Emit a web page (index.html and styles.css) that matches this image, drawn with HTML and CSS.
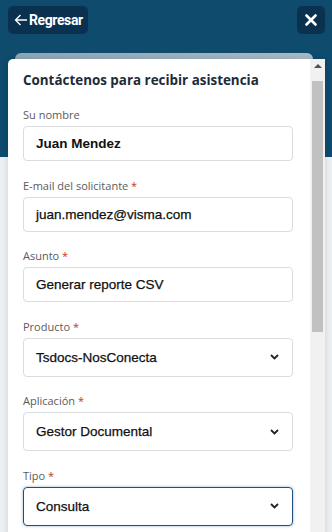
FILE: index.html
```html
<!DOCTYPE html>
<html lang="es">
<head>
    <meta charset="UTF-8">
    <meta name="viewport" content="width=device-width, initial-scale=1.0">
    <title>Contáctenos</title>
    <link rel="stylesheet" href="styles.css">
</head>
<body>
    <div class="topbar">
        <button class="back-button">
            <svg width="14" height="12" viewBox="0 0 14 12"><path d="M13 6H1.5M6.5 1L1.5 6l5 5" fill="none" stroke="#fff" stroke-width="1.3"/></svg>
            Regresar
        </button>
        <button class="close-button">
            <svg width="12" height="12" viewBox="0 0 12 12"><path d="M1.5 1.5l9 9M10.5 1.5l-9 9" stroke="#fff" stroke-width="2.6" stroke-linecap="round"/></svg>
        </button>
    </div>

    <div class="sheet-back"></div>

    <div class="sheet">
        <div class="sheet-body">
            <h2 class="title">Contáctenos para recibir asistencia</h2>

            <div class="field">
                <div class="label">Su nombre</div>
                <div class="control strong">Juan Mendez</div>
            </div>

            <div class="field">
                <div class="label">E-mail del solicitante <span class="req">*</span></div>
                <div class="control">juan.mendez@visma.com</div>
            </div>

            <div class="field">
                <div class="label">Asunto <span class="req">*</span></div>
                <div class="control">Generar reporte CSV</div>
            </div>

            <div class="field">
                <div class="label">Producto <span class="req">*</span></div>
                <div class="control select">Tsdocs-NosConecta
                    <svg width="9" height="6" viewBox="0 0 9 6"><path d="M1 1l3.5 3.5L8 1" fill="none" stroke="#222" stroke-width="1.8"/></svg>
                </div>
            </div>

            <div class="field">
                <div class="label">Aplicación <span class="req">*</span></div>
                <div class="control select">Gestor Documental
                    <svg width="9" height="6" viewBox="0 0 9 6"><path d="M1 1l3.5 3.5L8 1" fill="none" stroke="#222" stroke-width="1.8"/></svg>
                </div>
            </div>

            <div class="field">
                <div class="label">Tipo <span class="req">*</span></div>
                <div class="control select focused">Consulta
                    <svg width="9" height="6" viewBox="0 0 9 6"><path d="M1 1l3.5 3.5L8 1" fill="none" stroke="#222" stroke-width="1.8"/></svg>
                </div>
            </div>
        </div>

        <div class="scrollbar">
            <div class="scroll-up"></div>
            <div class="scroll-thumb"></div>
        </div>
    </div>
</body>
</html>
```

FILE: styles.css
```css
body {
    margin: 0;
    height: 532px;
    overflow: hidden;
    background: linear-gradient(#0e4b6d 0, #0e4b6d 157px, #eceff2 157px);
    font-family: "Open Sans", Arial, sans-serif;
}
.topbar {
    display: flex;
    justify-content: space-between;
    padding: 6px 7px 0 8px;
}
button {
    border: none;
    border-radius: 5px;
    background-color: #0b3150;
    color: white;
    height: 28px;
    cursor: pointer;
    display: flex;
    align-items: center;
    justify-content: center;
}
.back-button {
    width: 80px;
    padding: 0 0 0 6px;
    justify-content: flex-start;
    gap: 1px;
    font-family: Roboto, Arial, sans-serif;
    font-weight: 700;
    font-size: 14px;
    letter-spacing: -0.4px;
}
.close-button {
    width: 28px;
    padding: 0;
}
.sheet-back {
    margin: 19px 19px 0 15px;
    height: 6px;
    border-radius: 8px 8px 0 0;
    background: linear-gradient(90deg, #8ea6b6, #a9bac6);
}
.sheet {
    display: flex;
    margin-left: 8px;
    width: 317px;
    height: 480px;
    background-color: #fff;
    border-radius: 5px 5px 0 0;
    box-shadow: 0 0 6px rgba(0, 0, 0, 0.12);
}
.sheet-body {
    flex: 1;
    padding: 11px 17px 0 15px;
}
.title {
    margin: 0 0 17px;
    font-size: 13.4px;
    line-height: 20px;
    font-weight: 700;
    color: #1d2b39;
}
.field {
    margin-bottom: 16.5px;
}
.label {
    font-size: 11px;
    line-height: 16px;
    color: #5b5b5b;
    margin-bottom: 3px;
}
.req {
    color: #c0392b;
}
.control {
    display: flex;
    align-items: center;
    justify-content: space-between;
    height: 35px;
    box-sizing: border-box;
    padding: 0 12px;
    border: 1px solid #d9dde1;
    border-radius: 4px;
    font-family: "Liberation Sans", Arial, sans-serif;
    font-size: 13.5px;
    color: #111;
    -webkit-text-stroke: 0.25px #111;
}
.strong {
    font-weight: 700;
    -webkit-text-stroke: 0;
}
.select {
    height: 39px;
    padding-right: 13px;
}
.focused {
    border: 1.5px solid #1f4f7a;
    box-shadow: 0 0 3px rgba(31, 79, 122, 0.45);
}
.scrollbar {
    width: 15px;
    background-color: #f1f1f1;
    display: flex;
    flex-direction: column;
    align-items: center;
    padding-top: 5px;
}
.scroll-up {
    width: 0;
    height: 0;
    border-left: 4px solid transparent;
    border-right: 4px solid transparent;
    border-bottom: 4px solid #505050;
    margin-bottom: 13px;
}
.scroll-thumb {
    width: 11px;
    height: 251px;
    background-color: #c1c1c1;
}
```
